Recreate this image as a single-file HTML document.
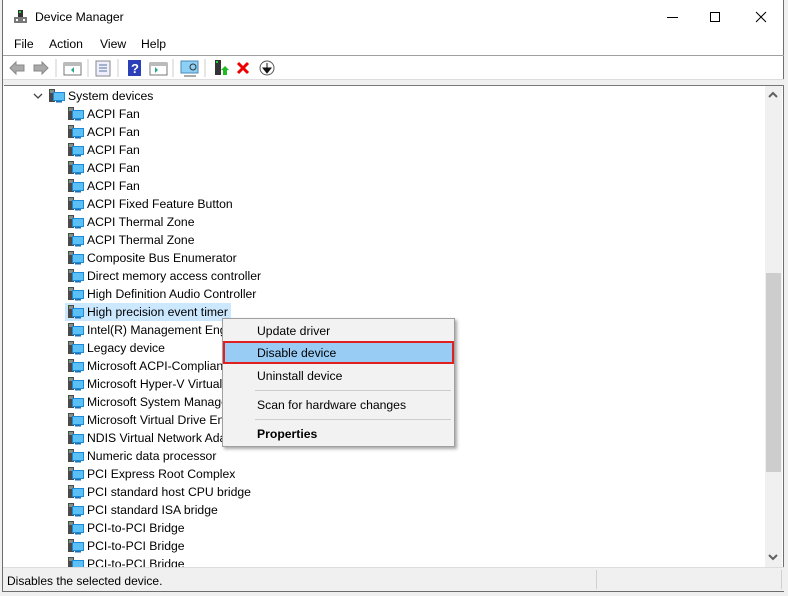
<!DOCTYPE html>
<html><head><meta charset="utf-8"><style>
*{margin:0;padding:0;box-sizing:border-box}
body{width:788px;height:596px;background:#f0f0f0;font-family:"Liberation Sans",Arial,sans-serif;font-size:12px;color:#000;position:relative;overflow:hidden}
.win{position:absolute;left:2px;top:0;width:782px;height:592px;background:#fff;border:1px solid #6e6e6e;border-top:none}
.abs{position:absolute}
.menu span{position:absolute;top:37px;font-size:12.2px}
.row{position:absolute;height:18px;line-height:18px;font-size:12.2px;white-space:nowrap}
.ico{position:absolute;width:17px;height:14px}
.cm{position:absolute;left:222px;top:318px;width:233px;height:129px;background:#f2f2f2;border:1px solid #a0a0a0;box-shadow:2px 2px 3px rgba(0,0,0,.35)}
.cm div{position:absolute;left:34px;font-size:12.2px}
</style></head><body>
<svg width="0" height="0" style="position:absolute"><defs>
<symbol id="dev" viewBox="0 0 17 14"><rect x="0" y="0" width="6" height="13" fill="#4a4a4a"/><rect x="1" y="1" width="4" height="3" fill="#8a8a8a"/><rect x="1" y="1" width="1" height="1" fill="#3c3"/><rect x="4" y="3" width="12" height="9" fill="#1b8ad8"/><rect x="5" y="4" width="10" height="7" fill="#5cc0f5"/><rect x="7" y="12" width="6" height="1.5" fill="#1b6fb0"/></symbol>
</defs></svg>
<div class="win">
 <svg class="abs" style="left:9px;top:9px" width="16" height="16"><rect x="6" y="1" width="5" height="7" fill="#333"/><rect x="7" y="2" width="2" height="2" fill="#3c3"/><rect x="2" y="8" width="13" height="6" fill="#777"/><rect x="4" y="10" width="2" height="2" fill="#fff"/><rect x="11" y="10" width="2" height="2" fill="#fff"/></svg>
 <div class="abs" style="left:32px;top:10px;font-size:12.2px">Device Manager</div>
 <div class="abs" style="left:664px;top:17px;width:11px;height:1px;background:#000"></div>
 <div class="abs" style="left:707px;top:12px;width:10px;height:10px;border:1px solid #000"></div>
 <svg class="abs" style="left:752px;top:11px" width="12" height="12"><path d="M1 1L11 11M11 1L1 11" stroke="#000" stroke-width="1"/></svg>
 <div class="menu"><span style="left:11px">File</span><span style="left:46px">Action</span><span style="left:97px">View</span><span style="left:138px">Help</span></div>
 <div class="abs" style="left:0;top:55px;width:781px;height:1px;background:#a0a0a0"></div>
 <svg class="abs" style="left:0;top:56px" width="290" height="24">
  <path d="M7 12L13 6V9H21V15H13V18Z" fill="#aaa" stroke="#888"/>
  <path d="M45 12L39 6V9H31V15H39V18Z" fill="#aaa" stroke="#888"/>
  <line x1="53" y1="3" x2="53" y2="21" stroke="#ccc"/>
  <rect x="61" y="7" width="17" height="12" fill="#fff" stroke="#777"/><rect x="61" y="7" width="17" height="3" fill="#bbb"/><path d="M71 11L68 14L71 17Z" fill="#2a8"/>
  <line x1="85" y1="3" x2="85" y2="21" stroke="#ccc"/>
  <rect x="93" y="5" width="14" height="15" fill="#eef" stroke="#888"/><path d="M96 9H104M96 12H104M96 15H104" stroke="#579"/>
  <line x1="115" y1="3" x2="115" y2="21" stroke="#ccc"/>
  <rect x="125" y="4" width="13" height="16" fill="#2a3fb8"/><text x="128" y="17" font-size="13" font-weight="bold" fill="#fff" font-family="Liberation Sans">?</text>
  <rect x="147" y="7" width="17" height="12" fill="#fff" stroke="#777"/><rect x="147" y="7" width="17" height="3" fill="#bbb"/><path d="M152 11L155 14L152 17Z" fill="#2a8"/>
  <line x1="170" y1="3" x2="170" y2="21" stroke="#ccc"/>
  <rect x="178" y="5" width="17" height="12" fill="#8cd0f5" stroke="#4a8ab8"/><circle cx="190" cy="11" r="3" fill="none" stroke="#333"/><path d="M181 20H193" stroke="#555"/>
  <line x1="202" y1="3" x2="202" y2="21" stroke="#ccc"/>
  <rect x="212" y="4" width="6" height="15" fill="#333"/><rect x="213" y="5" width="2" height="2" fill="#3c3"/><path d="M218 14L222 10L226 14H224V19H220V14Z" fill="#2b2"/>
  <path d="M235 7L245 17M245 7L235 17" stroke="#e00" stroke-width="3"/>
  <circle cx="264" cy="12" r="7" fill="#fff" stroke="#555"/><path d="M264 7V13M260 12L264 17L268 12Z" fill="#111" stroke="#111"/>
 </svg>
 <div class="abs" style="left:0;top:79px;width:781px;height:6px;background:#f0f0f0;border-top:1px solid #ddd"></div>
 <div class="abs" style="left:1px;top:85px;width:780px;height:1px;background:#777"></div>
 <div class="abs" style="left:762px;top:86px;width:17px;height:481px;background:#f0f0f0"></div>
 <div class="abs" style="left:763px;top:273px;width:15px;height:199px;background:#cdcdcd"></div>
 <svg class="abs" style="left:764px;top:90px" width="12" height="10"><path d="M2 7L6 3L10 7" stroke="#606060" stroke-width="2" fill="none"/></svg>
 <svg class="abs" style="left:764px;top:552px" width="12" height="10"><path d="M2 3L6 7L10 3" stroke="#606060" stroke-width="2" fill="none"/></svg>
 <div class="abs" style="left:2px;top:86px;width:760px;height:481px;overflow:hidden">
  <svg class="abs" style="left:28px;top:6px" width="10" height="8"><path d="M1 2L5 6L9 2" stroke="#444" stroke-width="1.3" fill="none"/></svg>
  <svg class="ico" style="left:44px;top:3px"><use href="#dev"/></svg>
  <div class="row" style="left:63px;top:1px">System devices</div>
  <div class="abs" style="left:60px;top:217px;width:166px;height:18px;background:#cce8ff"></div>
  <div id="list"></div>
 </div>
 <div class="abs" style="left:0;top:567px;width:781px;height:24px;background:#f0f0f0;border-top:1px solid #ddd"></div>
 <div class="abs" style="left:4px;top:574px;font-size:12px">Disables the selected device.</div>
 <div class="abs" style="left:593px;top:570px;width:1px;height:19px;background:#d0d0d0"></div>
 <div class="abs" style="left:778px;top:570px;width:1px;height:19px;background:#d0d0d0"></div>
</div>
<div class="cm">
 <div style="top:5px">Update driver</div>
 <div style="left:0;top:22px;width:231px;height:23px;background:#99ccf5;border:2px solid #e32020"></div>
 <div style="top:27px">Disable device</div>
 <div style="top:50px">Uninstall device</div>
 <div style="left:32px;top:71px;width:196px;height:1px;background:#ccc"></div>
 <div style="top:79px">Scan for hardware changes</div>
 <div style="left:32px;top:100px;width:196px;height:1px;background:#ccc"></div>
 <div style="top:108px;font-weight:bold">Properties</div>
</div>
<script>
var items=["ACPI Fan","ACPI Fan","ACPI Fan","ACPI Fan","ACPI Fan","ACPI Fixed Feature Button","ACPI Thermal Zone","ACPI Thermal Zone","Composite Bus Enumerator","Direct memory access controller","High Definition Audio Controller","High precision event timer","Intel(R) Management Engine Interface","Legacy device","Microsoft ACPI-Compliant System","Microsoft Hyper-V Virtualization","Microsoft System Management BIOS","Microsoft Virtual Drive Enumerator","NDIS Virtual Network Adapter","Numeric data processor","PCI Express Root Complex","PCI standard host CPU bridge","PCI standard ISA bridge","PCI-to-PCI Bridge","PCI-to-PCI Bridge","PCI-to-PCI Bridge"];
var h="";items.forEach(function(t,i){var y=19+i*18;h+='<svg class="ico" style="left:63px;top:'+(y+2)+'px"><use href="#dev"/></svg><div class="row" style="left:82px;top:'+y+'px">'+t+'</div>';});
document.getElementById("list").outerHTML=h;
</script>
</body></html>
